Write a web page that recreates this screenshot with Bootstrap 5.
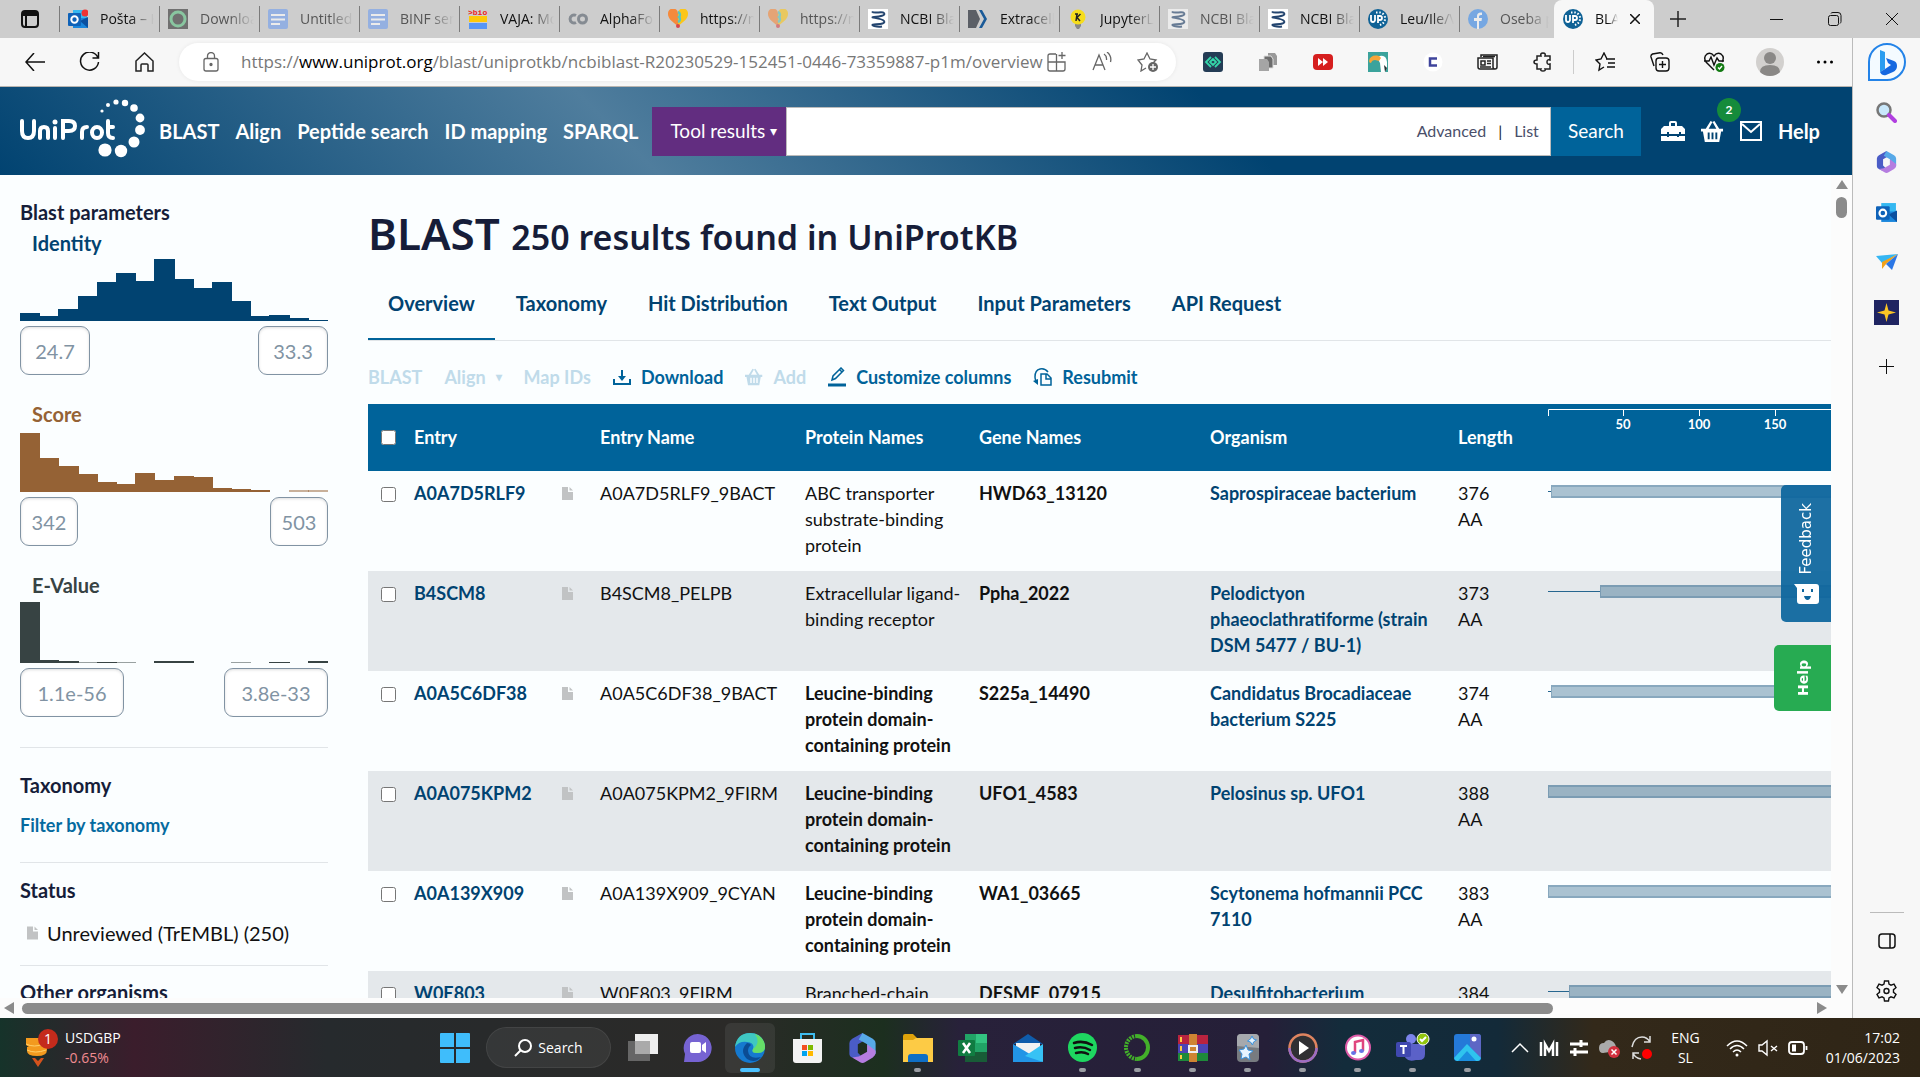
<!DOCTYPE html>
<html lang="en">
<head>
<meta charset="utf-8">
<meta name="viewport" content="width=device-width, initial-scale=1">
<title>BLAST results | UniProt</title>
<link href="https://cdn.jsdelivr.net/npm/bootstrap@5.3.0/dist/css/bootstrap.min.css" rel="stylesheet">
<style>
  :root { --navy: #014371; --sea: #00639a; --ink: #161d39; --page: #fbfeff; --steel: #8193a3; }
  body { height: 100vh; overflow: hidden; font-family: Lato, sans-serif; font-size: 18px; line-height: 26px; color: #111; background: var(--page); }
  a { text-decoration: none; color: inherit; }
  button, input { font-family: inherit; }
  svg { display: block; flex: none; }
  .ui { font-family: "Open Sans", sans-serif; }
  .plain { border: 0; background: none; padding: 0; color: inherit; }
  .fit { min-width: 0; min-height: 0; }
  /* window tabs */
  .strip { background: #cdcdcd; height: 38px; font-size: 14px; color: #111; flex: none; }
  .strip-lead { width: 59px; padding-left: 20px; }
  .wtab { width: 100px; height: 26px; border-left: 1px solid #7b7b7b; padding-left: 8px; gap: 12px; overflow: hidden; }
  .wtab span { flex: 1; min-width: 0; white-space: nowrap; overflow: hidden; margin-right: 5px; -webkit-mask-image: linear-gradient(90deg,#000 55%,transparent); mask-image: linear-gradient(90deg,#000 55%,transparent); }
  .wtab.asleep { color: #555; }
  .wtab.asleep svg { opacity: .6; }
  .wtab.live { background: #f7f7f7; height: 38px; border: 0; border-radius: 8px 8px 0 0; padding: 0 14px 0 9px; }
  .wtab.live span { margin: 0; }
  .wtab.last { width: 95px; }
  .winctl { gap: 38px; padding-right: 18px; }
  /* toolbar */
  .tools { background: #f7f7f7; height: 49px; flex: none; border-bottom: 1px solid #b9b5b0; padding-left: 7px; }
  .slot { width: 55px; height: 40px; flex: none; display: grid; place-items: center; }
  .address { flex: 1; height: 38px; border-radius: 19px; background: #fff; margin-left: 7px; padding: 0 17px 0 22px; box-shadow: 0 0 4px #0001; }
  .address p { flex: 1; margin: 0 0 0 20px; font-size: 17px; color: #777; white-space: nowrap; overflow: hidden; }
  .address b { font-weight: 400; color: #000; }
  .addr-icons { gap: 25px; }
  .exts { padding-left: 9px; }
  .vbar { width: 1px; height: 24px; background: #ccc; margin: 0 3px; }
  /* side bar of the window */
  .rail { width: 68px; background: #f7f7f7; border-left: 1px solid #bbb; padding: 5px 0 2px; flex: none; }
  .rail button { height: 50px; }
  .rail .first { height: 38px; margin-bottom: 6px; }
  .rail hr { width: 34px; margin: 0 0 3px; opacity: 1; color: #bbb; }
  /* site header */
  .masthead { height: 88px; background: linear-gradient(45deg,var(--navy) 0,#4f7d9d 34%,var(--navy) 66%); color: #fff; padding: 0 30px 0 20px; font-weight: 700; font-size: 20px; }
  .sitenav { gap: 16px; margin-left: 14px; margin-right: 14px; white-space: nowrap; }
  .query { flex: 1; height: 49px; font-weight: 400; font-size: 19px; }
  .query select { appearance: none; width: 134px; border: 0; background: #622d80; color: #fff; padding: 0 18px; }
  .pickwrap { position: relative; display: flex; }
  .pickwrap::after { content: "▾"; position: absolute; right: 9px; top: 11px; font-size: 14px; color: #fff; pointer-events: none; }
  .query .field { flex: 1; background: #fff; border: 1px solid #bbb; color: #4a4f6a; font-size: 16px; padding-right: 11px; gap: 12px; }
  .query input { flex: 1; min-width: 0; border: 0; outline: 0; background: none; }
  .query .go { width: 90px; border: 0; background: var(--sea); color: #fff; }
  .headicons { gap: 16px; margin-left: 20px; }
  .headicons > :last-child { padding-right: 2px; }
  .basket { position: relative; }
  .count { position: absolute; left: 16px; top: -22px; width: 24px; height: 24px; border-radius: 50%; background: #158b3b; font: 700 12px/24px Lato, sans-serif; text-align: center; }
  /* filters */
  .filters { width: 328px; padding: 23px 0 0 20px; flex: none; overflow: hidden; font-size: 20px; }
  .filters h2, .filters h3 { font-size: 20px; line-height: 28px; font-weight: 700; margin: 0; color: var(--ink); }
  .filters h3 { padding-left: 12px; margin-top: 3px; color: var(--tone); }
  .filters h4 { font-size: 20px; line-height: 26px; font-weight: 700; margin: 0; color: var(--ink); }
  .p-identity { --tone: #014371; }
  .p-score { --tone: #956235; }
  .p-evalue { --tone: #374343; }
  .param + .param { margin-top: 25px; }
  .hist { height: 64px; display: flex; align-items: flex-end; }
  .hist i { flex: 1; background: var(--tone); margin-right: -1px; }
  .hist i:last-child { margin-right: 0; }
  .hist .dim { opacity: .5; }
  .ends { margin-top: 5px; }
  .ends input { width: 70px; height: 49px; border: 1px solid var(--steel); border-radius: 9px; text-align: center; color: var(--steel); font-size: 20px; background: #fff; box-shadow: inset 0 1px 3px #0002; padding: 0; }
  .three input { width: 58px; }
  .wide input { width: 104px; }
  .filters section { border-top: 1px solid #e1e5e8; }
  .sec-a { margin-top: 30px; padding: 24px 0; }
  .sec-a a { color: #056a9f; font-size: 18px; margin-top: 14px; }
  .sec-b { padding: 14px 0 19px; }
  .sec-b a { gap: 9px; padding-left: 7px; margin-top: 17px; }
  .sec-c { padding: 13px 0; }
  /* results */
  .results { padding: 0 0 0 40px; }
  .results h1 { font-family: "Noto Sans", sans-serif; font-weight: 600; color: var(--ink); font-size: 44px; line-height: 54px; margin: 31px 0 0; white-space: nowrap; }
  .results h1 small { font-size: 34px; font-weight: 600; }
  .pagetabs { margin-top: 1px; height: 76px; border-bottom: 1px solid #e1e5e8; font-size: 20px; font-weight: 700; color: var(--navy); gap: 1px; }
  .pagetabs a { height: 75px; padding: 2px 20px 0; display: flex; align-items: center; border-bottom: 2px solid transparent; white-space: nowrap; }
  .pagetabs .active { border-color: var(--sea); }
  .actions { height: 63px; padding-top: 8px; gap: 22px; font-weight: 700; color: var(--sea); white-space: nowrap; }
  .actions button { display: flex; align-items: center; gap: 10px; font-weight: 700; font-size: 18px; }
  .actions button:disabled { color: #c0dbea; }
  .caret { font-size: 12px; }
  .hits { table-layout: fixed; width: 1463px; min-width: 100%; --bs-table-bg: transparent; }
  .c-check { width: 40px; } .c-entry { width: 148px; } .c-sheet { width: 38px; } .c-name { width: 205px; } .c-protein { width: 174px; } .c-gene { width: 231px; } .c-org { width: 248px; } .c-len { width: 90px; }
  .hits > :not(caption) > * > * { padding: 9px 6px 13px; }
  .hits > thead > tr > th { background: var(--sea); color: #fff; height: 67px; vertical-align: middle; padding: 0 6px 1px; }
  .hits > tbody > tr > * { height: 100px; color: #111; font-weight: 400; }
  .hits > tbody > tr:nth-child(even) > * { background: #e4e8eb; }
  .hits input { width: 15px; height: 15px; display: block; margin: 0 0 0 7px; }
  .hits tbody input { margin-top: 7px; }
  .hits b { font-weight: 700; }
  .hits .lk { color: var(--navy); font-weight: 700; }
  .hits > tbody > tr > .viz { padding: 14px 0 0 6px; }
  .hits > thead > tr > .axis { padding: 0 0 0 6px; vertical-align: top; }
  .track { display: flex; height: 13px; align-items: center; }
  .track i { height: 1px; background: #26668f; flex: none; }
  .track span { flex: 1; height: 13px; background: #01437152; border: 1px solid #01437133; border-width: 2px 0 2px 1px; }
  .sheet { margin-top: 7px; }
  .stick { position: absolute; right: 21px; border: 0; color: #fff; }
  .stick span { writing-mode: vertical-rl; transform: rotate(180deg); }
  .fb { top: 310px; width: 50px; height: 137px; background: #0c659ded; border-radius: 5px 0 0 5px; font: 15px/20px "DejaVu Sans", sans-serif; gap: 10px; padding: 0; }
  .hp { top: 470px; width: 57px; height: 66px; background: #27ab52; border-radius: 5px 0 0 5px; font: 700 14px/20px "DejaVu Sans", sans-serif; padding: 0; }
  .vscroll { width: 21px; background: #fcfcfc; padding: 5px 0 4px; flex: none; }
  .vscroll i { width: 11px; height: 21px; border-radius: 6px; background: #8b8b8b; margin-top: 8px; }
  .hscroll { height: 20px; background: #fcfcfc; padding: 0 25px 0 4px; flex: none; }
  .hscroll i { flex: 0 1 84%; height: 11px; border-radius: 6px; background: #8b8b8b; margin-left: 8px; }
  /* task bar */
  .taskbar { height: 59px; flex: none; color: #fff; font-size: 14px; line-height: 20px; background: linear-gradient(90deg,#16332a 0,#3b1d2c 7%,#262a2d 17%,#2b2a28 38%,#1c2f1f 46%,#28213a 50%,#251f38 66%,#132c3b 70%,#132a39 78%,#33291a 83%,#2f2516 100%); }
  .ticker { width: 427px; padding-left: 24px; gap: 7px; }
  .drop { color: #f08b91; }
  .tsk { width: 55px; height: 59px; position: relative; display: grid; place-items: center; }
  .tsk.run::after, .tsk.front::after { content: ""; position: absolute; bottom: 5px; left: 24px; width: 7px; height: 4px; border-radius: 2px; background: #9a9da3; }
  .tsk.front { background: #ffffff12; height: 50px; width: 50px; border-radius: 6px; margin-right: 5px; }
  .tsk.front::after { left: 15px; width: 20px; bottom: 1px; background: #4cc2ff; }
  .find { width: 125px; height: 41px; border-radius: 21px; background: #ffffff10; border: 1px solid #ffffff12; color: #fff; gap: 6px; margin: 0 4px; }
  .tray { gap: 10px; padding-right: 20px; }
</style>
</head>
<body class="d-flex flex-column">

<svg width="0" height="0" class="position-absolute" aria-hidden="true">
  <symbol id="gdoc" viewBox="0 0 20 20"><rect width="20" height="20" rx="2" fill="#6f9eef"/><path d="M3 6h14M3 10.500h14M3 15h9" stroke="#fff" stroke-width="2"/></symbol>
  <symbol id="heart" viewBox="0 0 20 20"><path d="M10 17C3 12 0 9 0 5a5 5 0 0 1 10-1z" fill="#f58a3c"/><path d="M10 17c7-5 10-8 10-12a5 5 0 0 0-10-1z" fill="#fbc618"/><path d="M10 3a3 3 0 0 1 1 5 3 3 0 0 1-1 5" stroke="#59c4c2" stroke-width="2.500" fill="none"/><circle cx="10" cy="17" r="2" fill="#d8454a"/></symbol>
  <symbol id="ncbi" viewBox="0 0 20 20"><rect width="20" height="20" fill="#fff"/><path d="M4 2.500c2 3 10-1 12 1.500s-4 3.500-10 4 8 1 10 4-5 3-10 3.500 3 3 8 2" fill="none" stroke="#24456f" stroke-width="2"/></symbol>
  <symbol id="up" viewBox="0 0 20 20"><circle cx="10" cy="10" r="10" fill="#0f6296"/><path d="M3 6v5a2 2 0 0 0 4 0V6M10 14V7h2a2 2 0 0 1 0 4h-2" fill="none" stroke="#fff" stroke-width="1.800"/><path d="M8 3.500h4a6 6 0 0 1 5 7q-1 5-7 6" fill="none" stroke="#fff" stroke-width="2" stroke-dasharray="1.500 1.800"/></symbol>
  <symbol id="outl" viewBox="0 0 20 20"><path d="M5 1h14v10H5z" fill="#35b8f1"/><path d="M5 9h15v10H5z" fill="#1a86dc"/><path d="M12 12l8 7V8z" fill="#0b50a0"/><rect y="4" width="13" height="13" rx="1" fill="#0f62b8"/><circle cx="6.500" cy="10.500" r="3.200" fill="none" stroke="#fff" stroke-width="2"/></symbol>
  <symbol id="m365" viewBox="0 0 28 32"><path d="M14 0L3 6Q0 8 0 11v11q0 3 3 4l6 3 3-5-3-3v-9l9-5z" fill="#4a5cc6"/><path d="M14 0l11 6q3 2 3 5v11l-4 3-5-4v-9l-9-5z" fill="#57a9e8"/><path d="M28 19v2q0 3-3 5l-8 5q-3 2-6 0L3 26l7-1 9-5v-8z" fill="#b57de0"/></symbol>
  <symbol id="basketicon" viewBox="0 0 24 24"><path d="M1 9h4l5-8 2 1-4 7h8l-4-7 2-1 5 8h4v3h-2l-2 11H4L2 12H0V9zm6 4v7h2v-7zm4 0v7h2v-7zm4 0v7h2v-7z" fill="currentColor"/></symbol>
  <symbol id="docicon" viewBox="0 0 11 13"><path d="M0 0h6v5h5v8H0z" fill="#c1c3c4"/><path d="M7.500 0v3.500H11z" fill="#c1c3c4"/></symbol>
</svg>

<!-- window tabs -->
<div class="strip ui d-flex align-items-center">
  <div class="strip-lead"><svg width="20" height="20" viewBox="0 0 20 20" fill="none" stroke="#111" stroke-width="2"><rect x="2" y="2" width="16" height="16" rx="3"/><path d="M2 5h16" stroke-width="4"/><path d="M6 5v13"/></svg></div>
  <div class="wtab d-flex align-items-center"><svg width="20" height="20"><use href="#outl"/><circle cx="17" cy="4" r="3.500" fill="#e33"/></svg><span>Pošta – Kla</span></div>
  <div class="wtab asleep d-flex align-items-center"><svg width="20" height="20" viewBox="0 0 20 20"><rect width="20" height="20" fill="#333"/><circle cx="10" cy="10" r="7" fill="none" stroke="#5cc283" stroke-width="3"/></svg><span>Downloads</span></div>
  <div class="wtab asleep d-flex align-items-center"><svg width="20" height="20"><use href="#gdoc"/></svg><span>Untitled d</span></div>
  <div class="wtab asleep d-flex align-items-center"><svg width="20" height="20"><use href="#gdoc"/></svg><span>BINF semi</span></div>
  <div class="wtab d-flex align-items-center"><svg width="20" height="20" viewBox="0 0 20 20"><text x="0" y="6" font-size="8" font-weight="700" fill="#e22" font-family="Liberation Mono">&gt;bio</text><path d="M1 7h18v6H1z" fill="#fdc809"/><path d="M1 14h18v6H1z" fill="#5796f5"/></svg><span>VAJA: Mo</span></div>
  <div class="wtab d-flex align-items-center"><svg width="20" height="20" viewBox="0 0 20 20" fill="none" stroke="#858b92" stroke-width="3"><path d="M8 6.500a4 4 0 1 0 0 7"/><circle cx="14.500" cy="10" r="4"/></svg><span>AlphaFold</span></div>
  <div class="wtab d-flex align-items-center"><svg width="20" height="20"><use href="#heart"/></svg><span>https://mo</span></div>
  <div class="wtab asleep d-flex align-items-center"><svg width="20" height="20"><use href="#heart"/></svg><span>https://mo</span></div>
  <div class="wtab d-flex align-items-center"><svg width="20" height="20"><use href="#ncbi"/></svg><span>NCBI Blast</span></div>
  <div class="wtab d-flex align-items-center"><svg width="20" height="20" viewBox="0 0 20 20"><path d="M0 1h8l4 9-4 9H0z" fill="#5b5f66"/><path d="M11 1h3l5 9-5 9h-3l5-9z" fill="#1a5a98"/></svg><span>Extracellul</span></div>
  <div class="wtab d-flex align-items-center"><svg width="20" height="20" viewBox="0 0 20 20"><path d="M7 13h6v4l-2 3H9l-2-3z" fill="#888"/><circle cx="10" cy="8" r="7.500" fill="#f6dd1b"/><path d="M9 5l-1 7M12.500 5L9 8.500l3 3.500M7 5h3" stroke="#222" stroke-width="1.500" fill="none"/></svg><span>JupyterLab</span></div>
  <div class="wtab asleep d-flex align-items-center"><svg width="20" height="20"><use href="#ncbi"/></svg><span>NCBI Blast</span></div>
  <div class="wtab d-flex align-items-center"><svg width="20" height="20"><use href="#ncbi"/></svg><span>NCBI Blast</span></div>
  <div class="wtab d-flex align-items-center"><svg width="20" height="20"><use href="#up"/></svg><span>Leu/Ile/Val</span></div>
  <div class="wtab last asleep d-flex align-items-center"><svg width="20" height="20" viewBox="0 0 20 20"><circle cx="10" cy="10" r="10" fill="#3d8ff0"/><path d="M9 20v-8H6V9h3V7q0-4 5-3.500V6q-3-.5-3 1.500V9h3l-.5 3H11v8z" fill="#fff"/></svg><span>Oseba po</span></div>
  <div class="wtab live d-flex align-items-center"><svg width="20" height="20"><use href="#up"/></svg><span>BLAST</span><svg width="10" height="10" viewBox="0 0 10 10" stroke="#111" stroke-width="1.500"><path d="M0 0l10 10M10 0L0 10"/></svg></div>
  <button class="plain ms-3" aria-label="New tab"><svg width="16" height="16" viewBox="0 0 16 16" stroke="#222" stroke-width="1.500"><path d="M8 0v16M0 8h16"/></svg></button>
  <div class="winctl d-flex align-items-center ms-auto">
    <svg width="20" height="14" viewBox="0 0 20 14" stroke="#111"><path d="M4 7.500h13"/></svg>
    <svg width="20" height="14" viewBox="0 0 20 14" fill="none" stroke="#111"><rect x="4.500" y="3.500" width="10" height="10" rx="2"/><path d="M7 1.500q0-1 2-1h5q3 0 3 3v6q0 1-1 2"/></svg>
    <svg width="20" height="14" viewBox="0 0 20 14" stroke="#111"><path d="M4 1l12 12M16 1L4 13"/></svg>
  </div>
</div>

<div class="d-flex flex-grow-1 fit">
<div class="d-flex flex-column flex-grow-1 fit">

  <!-- toolbar -->
  <div class="tools ui d-flex align-items-center">
    <button class="plain slot" aria-label="Back"><svg width="20" height="18" viewBox="0 0 20 18" fill="none" stroke="#111" stroke-width="1.500"><path d="M9 0L1 9l8 9M1 9h19"/></svg></button>
    <button class="plain slot" aria-label="Refresh"><svg width="21" height="20" viewBox="0 0 21 20" fill="none" stroke="#111" stroke-width="1.500"><path d="M19 6A9 9 0 1 0 19.500 10M19.500 0v6h-6"/></svg></button>
    <button class="plain slot" aria-label="Home"><svg width="19" height="20" viewBox="0 0 19 20" fill="none" stroke="#222" stroke-width="1.500"><path d="M1 9l8.500-8L18 9v10h-5v-6q0-1-1-1H7q-1 0-1 1v6H1z"/></svg></button>
    <div class="address d-flex align-items-center">
      <svg width="20" height="20" viewBox="0 0 20 20" fill="none" stroke="#666" stroke-width="1.300"><rect x="3" y="6.500" width="14" height="12.500" rx="2"/><path d="M6.500 6V4a3.500 3.500 0 0 1 7 0v2"/><circle cx="10" cy="12.500" r="1" fill="#666"/></svg>
      <p>https://<b>www.uniprot.org</b>/blast/uniprotkb/ncbiblast-R20230529-152451-0446-73359887-p1m/overview</p>
      <div class="addr-icons d-flex">
        <svg width="20" height="20" viewBox="0 0 20 20" fill="none" stroke="#666" stroke-width="1.300"><path d="M9 2H3Q1 2 1 4v13q0 2 2 2h13q2 0 2-2v-7H1M9.500 2v17M15 0v7M11.500 3.500h7"/></svg>
        <svg width="20" height="20" viewBox="0 0 20 20" fill="none" stroke="#666" stroke-width="1.300"><path d="M1 18L7 3l6 15M3 13h8M12 2q3 2 2.500 6M15 0q5 4 3.500 10"/></svg>
        <svg width="22" height="20" viewBox="0 0 22 20" fill="none" stroke="#666" stroke-width="1.300"><path d="M9 16l-5 3 1-6-4-5 6-1 3-6 3 6 6 1-3 3"/><circle cx="16" cy="15" r="5" fill="#666" stroke="none"/><path d="M16 12v6M13 15h6" stroke="#fff"/></svg>
      </div>
    </div>
    <div class="exts d-flex align-items-center">
      <div class="slot"><svg width="20" height="20" viewBox="0 0 20 20"><rect width="20" height="20" rx="3" fill="#243c55"/><path d="M8 5l-5 5 5 5M12 5l5 5-5 5M10 7l-3 3 3 3 3-3z" fill="none" stroke="#34d6a9" stroke-width="1.800"/></svg></div>
      <div class="slot"><svg width="18" height="18" viewBox="0 0 18 18"><path d="M9 0h7l2 3v9H9z" fill="#999"/><path d="M5 3h7l2 3v9H5z" fill="#6c6c6c" stroke="#ddd"/><path d="M0 6h8l2 3v9H0z" fill="#a5a5a5"/></svg></div>
      <div class="slot"><svg width="20" height="16" viewBox="0 0 20 16"><rect width="20" height="16" rx="4" fill="#d61f1f"/><path d="M5 4l5 4-5 4zM10 4l5 4-5 4z" fill="#fff"/></svg></div>
      <div class="slot"><svg width="20" height="20" viewBox="0 0 20 20"><rect width="20" height="20" fill="#3ba39c"/><path d="M9 5q9-4 10 5v6l-2 4h-4l-1-9z" fill="#fff"/><path d="M1 9q1-6 8-5.500 3 0 4 2.500l-2 3-4-1q-3 0-4 3-2 0-2-2z" fill="#f7a538"/><path d="M16 13l3 3-2 4z" fill="#233"/></svg></div>
      <div class="slot"><svg width="20" height="20" viewBox="0 0 20 20"><circle cx="10" cy="10" r="9.500" fill="#fff"/><path d="M14 6.500H7v7h7" fill="none" stroke="#3f449c" stroke-width="2.500"/></svg></div>
      <div class="slot"><svg width="21" height="16" viewBox="0 0 21 16" fill="none" stroke="#222" stroke-width="1.500"><path d="M4 3V1h16v12q0 2-2 2H3q-2 0-2-2V4h15v9q0 2 2 2"/><path d="M4 7h4v4H4zM10 7h4M10 9.500h4M3 13h11M6 2.500h12"/></svg></div>
      <div class="slot"><svg width="20" height="20" viewBox="0 0 20 20" fill="none" stroke="#222" stroke-width="1.500"><path d="M4 4h4q-1-3 2-3t2 3h5v4q-3-1-3 2t3 2v5h-5q1 2-2 2t-2-2H4v-5q-3 0-3-2t3-2z"/></svg></div>
      <div class="vbar"></div>
      <div class="slot"><svg width="20" height="20" viewBox="0 0 20 20" fill="none" stroke="#111" stroke-width="1.400"><path d="M9 15l-5 3 1-6-4-4 5-1 3-6 3 6M11 7h9M13 11h7M12 15h8"/></svg></div>
      <div class="slot"><svg width="20" height="20" viewBox="0 0 20 20" fill="none" stroke="#111" stroke-width="1.400"><rect x="6" y="6" width="13" height="13" rx="3"/><path d="M12.500 9v7M9 12.500h7M4 14L1 5q-.5-2 1.500-3L10 .8Q12 .6 13 3"/></svg></div>
      <div class="slot"><svg width="21" height="20" viewBox="0 0 21 20" fill="none" stroke="#111" stroke-width="1.400"><path d="M10 18L2 10Q-1 5 3 2q4-2 7 2 3-4 7-2 4 3 1 8M0 9h5l2-4 3 8 3-7 2 3h5"/><circle cx="16" cy="15.500" r="4.500" fill="#137a13" stroke="none"/><path d="M14 15.500l1.500 1.500 2.500-3" stroke="#fff"/></svg></div>
      <div class="slot"><svg width="28" height="28" viewBox="0 0 28 28"><circle cx="14" cy="14" r="14" fill="#d2d0ce"/><circle cx="14" cy="10" r="6" fill="#8a8886"/><path d="M4 24q0-7 10-7t10 7q-4 4-10 4T4 24z" fill="#8a8886"/></svg></div>
      <div class="slot"><svg width="16" height="4" viewBox="0 0 16 4"><path d="M0 2a1.500 1.500 0 1 0 3 0 1.500 1.500 0 1 0-3 0m6.500 0a1.500 1.500 0 1 0 3 0 1.500 1.500 0 1 0-3 0M13 2a1.500 1.500 0 1 0 3 0 1.500 1.500 0 1 0-3 0"/></svg></div>
    </div>
  </div>

  <!-- site header -->
  <header class="masthead d-flex align-items-center flex-shrink-0">
    <a href="#" aria-label="UniProt"><svg width="125" height="64" viewBox="0 0 125 64" fill="none" stroke="#fff" stroke-width="4" stroke-linecap="round">
      <path d="M2 22v10q0 7 6 7t6-7V22M20 39V32q0-4 4-4t4 4v7M35 29v10M43 39V22h6q6 0 6 5t-6 5h-5M62 39V33q0-5 5-5"/><ellipse cx="77" cy="33.500" rx="5" ry="5.500"/><path d="M88 22v12q0 5 5 5M88 28h5"/>
      <g fill="#fff" stroke="none"><circle cx="35" cy="23" r="2.500"/><circle cx="82" cy="12" r="1.600"/><circle cx="88" cy="6" r="2"/><circle cx="96" cy="3" r="2.600"/><circle cx="105" cy="4" r="3.200"/><circle cx="114" cy="9" r="3.800"/><circle cx="120" cy="19" r="4.400"/><circle cx="120" cy="31" r="4.900"/><circle cx="114" cy="43" r="5.500"/><circle cx="101" cy="52" r="6.200"/><circle cx="85" cy="51" r="6.600"/></g></svg></a>
    <nav class="sitenav d-flex"><a href="#">BLAST</a><a href="#">Align</a><a href="#">Peptide search</a><a href="#">ID mapping</a><a href="#">SPARQL</a></nav>
    <form class="query d-flex">
      <div class="pickwrap"><select aria-label="Namespace"><option>Tool results</option></select></div>
      <div class="field d-flex align-items-center"><input type="text" aria-label="Query"><a href="#">Advanced</a><span class="text-dark">|</span><a href="#">List</a></div>
      <button type="button" class="go">Search</button>
    </form>
    <div class="headicons d-flex align-items-center">
      <svg width="24" height="24" viewBox="0 0 24 24"><path d="M8 7V4q0-2 2-2h4q2 0 2 2v3h5l3 3v5h-4v-2h-2v2H8v-2H6v2H0v-5l3-3zm2 0h4V4h-4zM0 17h6v1h2v-1h8v1h2v-1h6v5H0z" fill="#fff"/></svg>
      <a href="#" class="basket" aria-label="Basket"><svg width="23" height="23"><use href="#basketicon"/></svg><span class="count">2</span></a>
      <svg width="22" height="22" viewBox="0 0 22 22" fill="none" stroke="#fff" stroke-width="2"><path d="M1 2h20v18H1zM2 4l9 8 9-8"/></svg>
      <a href="#">Help</a>
    </div>
  </header>

  <!-- page -->
  <div class="d-flex flex-grow-1 position-relative overflow-hidden">
    <aside class="filters">
      <h2>Blast parameters</h2>
      <div class="param p-identity">
        <h3>Identity</h3>
        <div class="hist"><i style="height:8px"></i><i style="height:5px"></i><i style="height:12px"></i><i style="height:25px"></i><i style="height:39px"></i><i style="height:48px"></i><i style="height:40px"></i><i style="height:62px"></i><i style="height:42px"></i><i style="height:33px"></i><i style="height:39px"></i><i style="height:20px"></i><i style="height:5px"></i><i style="height:6px"></i><i style="height:3px"></i><i style="height:1px"></i></div>
        <div class="ends d-flex justify-content-between"><input aria-label="Identity min" value="24.7"><input aria-label="Identity max" value="33.3"></div>
      </div>
      <div class="param p-score">
        <h3>Score</h3>
        <div class="hist"><i style="height:59px"></i><i style="height:34px"></i><i style="height:26px"></i><i style="height:18px"></i><i style="height:10px"></i><i style="height:8px"></i><i style="height:19px"></i><i style="height:12px"></i><i style="height:16px"></i><i style="height:15px"></i><i style="height:4px"></i><i style="height:3px"></i><i style="height:2px"></i><i style="height:0"></i><i class="dim" style="height:2px"></i><i class="dim" style="height:2px"></i></div>
        <div class="ends three d-flex justify-content-between"><input aria-label="Score min" value="342"><input aria-label="Score max" value="503"></div>
      </div>
      <div class="param p-evalue">
        <h3>E-Value</h3>
        <div class="hist"><i style="height:61px"></i><i style="height:3px"></i><i style="height:2px"></i><i class="dim" style="height:1px"></i><i style="height:1px"></i><i class="dim" style="height:1px"></i><i style="height:0"></i><i style="height:2px"></i><i style="height:2px"></i><i style="height:0"></i><i style="height:0"></i><i class="dim" style="height:1px"></i><i style="height:0"></i><i style="height:1px"></i><i style="height:0"></i><i style="height:2px"></i></div>
        <div class="ends wide d-flex justify-content-between"><input aria-label="E-Value min" value="1.1e-56"><input aria-label="E-Value max" value="3.8e-33"></div>
      </div>
      <section class="sec-a"><h4>Taxonomy</h4><a href="#" class="d-block fw-bold">Filter by taxonomy</a></section>
      <section class="sec-b"><h4>Status</h4><a href="#" class="d-flex align-items-center"><svg width="11" height="14"><use href="#docicon"/></svg>Unreviewed (TrEMBL) (250)</a></section>
      <section class="sec-c"><h4>Other organisms</h4></section>
    </aside>

    <main class="results flex-grow-1 overflow-hidden fit">
      <h1>BLAST <small>250 results found in UniProtKB</small></h1>
      <nav class="pagetabs d-flex"><a class="active" href="#">Overview</a><a href="#">Taxonomy</a><a href="#">Hit Distribution</a><a href="#">Text Output</a><a href="#">Input Parameters</a><a href="#">API Request</a></nav>
      <div class="actions d-flex align-items-center">
        <button class="plain" disabled>BLAST</button>
        <button class="plain" disabled>Align <span class="caret">▾</span></button>
        <button class="plain" disabled>Map IDs</button>
        <button class="plain"><svg width="18" height="18" viewBox="0 0 18 18" fill="none" stroke="#00639a" stroke-width="2"><path d="M9 2v9M1 11v5h16v-5"/><path d="M5 8l4 5 4-5z" fill="#00639a" stroke="none"/></svg>Download</button>
        <button class="plain" disabled><svg width="18" height="18"><use href="#basketicon"/></svg>Add</button>
        <button class="plain"><svg width="18" height="20" viewBox="0 0 18 20" fill="none" stroke="#00639a"><path d="M0 18h18" stroke-width="3"/><path d="M4 13l1-4 8-8 2.500 2.500-8 8zM11.500 2.500L14 5" stroke-width="1.500"/></svg>Customize columns</button>
        <button class="plain"><svg width="19" height="18" viewBox="0 0 19 18" fill="none" stroke="#00639a" stroke-width="1.500"><path d="M8 6h6l4 4v7H8zM13 6v5h5M15 4Q12 0 7 1T2 9q0 2 1 4"/><path d="M0 13l5 4V11z" fill="#00639a" stroke="none"/></svg>Resubmit</button>
      </div>
      <table class="table table-borderless mb-0 hits">
        <colgroup><col class="c-check"><col class="c-entry"><col class="c-sheet"><col class="c-name"><col class="c-protein"><col class="c-gene"><col class="c-org"><col class="c-len"><col></colgroup>
        <thead><tr><th><input type="checkbox" aria-label="Select all"></th><th colspan="2">Entry</th><th>Entry Name</th><th>Protein Names</th><th>Gene Names</th><th>Organism</th><th>Length</th>
          <th class="axis"><svg width="289" height="30" viewBox="0 0 289 30"><path d="M.5 12V5.500H289M75.500 5v7M151.500 5v7M227.500 5v7" fill="none" stroke="#fff"/><g fill="#fff" font-size="13" font-weight="700" text-anchor="middle" font-family="Lato"><text x="75" y="25">50</text><text x="151" y="25">100</text><text x="227" y="25">150</text></g></svg></th></tr></thead>
        <tbody>
          <tr><td><input type="checkbox" aria-label="A0A7D5RLF9"></td><td><a class="lk" href="#">A0A7D5RLF9</a></td><td><svg class="sheet" width="11" height="13"><use href="#docicon"/></svg></td><td>A0A7D5RLF9_9BACT</td><td>ABC transporter substrate-binding protein</td><td><b>HWD63_13120</b></td><td><a class="lk" href="#">Saprospiraceae bacterium</a></td><td>376<br>AA</td><td class="viz"><div class="track"><i style="width:3px"></i><span></span></div></td></tr>
          <tr><td><input type="checkbox" aria-label="B4SCM8"></td><td><a class="lk" href="#">B4SCM8</a></td><td><svg class="sheet" width="11" height="13"><use href="#docicon"/></svg></td><td>B4SCM8_PELPB</td><td>Extracellular ligand-binding receptor</td><td><b>Ppha_2022</b></td><td><a class="lk" href="#">Pelodictyon phaeoclathratiforme (strain DSM 5477 / BU-1)</a></td><td>373<br>AA</td><td class="viz"><div class="track"><i style="width:52px"></i><span></span></div></td></tr>
          <tr><td><input type="checkbox" aria-label="A0A5C6DF38"></td><td><a class="lk" href="#">A0A5C6DF38</a></td><td><svg class="sheet" width="11" height="13"><use href="#docicon"/></svg></td><td>A0A5C6DF38_9BACT</td><td><b>Leucine-binding protein domain-containing protein</b></td><td><b>S225a_14490</b></td><td><a class="lk" href="#">Candidatus Brocadiaceae bacterium S225</a></td><td>374<br>AA</td><td class="viz"><div class="track"><i style="width:3px"></i><span></span></div></td></tr>
          <tr><td><input type="checkbox" aria-label="A0A075KPM2"></td><td><a class="lk" href="#">A0A075KPM2</a></td><td><svg class="sheet" width="11" height="13"><use href="#docicon"/></svg></td><td>A0A075KPM2_9FIRM</td><td><b>Leucine-binding protein domain-containing protein</b></td><td><b>UFO1_4583</b></td><td><a class="lk" href="#">Pelosinus sp. UFO1</a></td><td>388<br>AA</td><td class="viz"><div class="track"><span></span></div></td></tr>
          <tr><td><input type="checkbox" aria-label="A0A139X909"></td><td><a class="lk" href="#">A0A139X909</a></td><td><svg class="sheet" width="11" height="13"><use href="#docicon"/></svg></td><td>A0A139X909_9CYAN</td><td><b>Leucine-binding protein domain-containing protein</b></td><td><b>WA1_03665</b></td><td><a class="lk" href="#">Scytonema hofmannii PCC 7110</a></td><td>383<br>AA</td><td class="viz"><div class="track"><span></span></div></td></tr>
          <tr><td><input type="checkbox" aria-label="W0E803"></td><td><a class="lk" href="#">W0E803</a></td><td><svg class="sheet" width="11" height="13"><use href="#docicon"/></svg></td><td>W0E803_9FIRM</td><td>Branched-chain</td><td><b>DESME_07915</b></td><td><a class="lk" href="#">Desulfitobacterium</a></td><td>384</td><td class="viz"><div class="track"><i style="width:21px"></i><span></span></div></td></tr>
        </tbody>
      </table>
    </main>

    <div class="vscroll d-flex flex-column align-items-center">
      <svg width="12" height="9" viewBox="0 0 12 9"><path d="M6 0l6 9H0z" fill="#8b8b8b"/></svg><i></i>
      <svg class="mt-auto" width="12" height="9" viewBox="0 0 12 9"><path d="M6 9l6-9H0z" fill="#8b8b8b"/></svg>
    </div>
    <button class="stick fb d-flex flex-column align-items-center justify-content-center"><span>Feedback</span><svg width="25" height="20" viewBox="0 0 25 20"><path d="M0 0h22q3 0 3 3v14q0 3-3 3H6q-3 0-3-3V4z" fill="#fff"/><path d="M9 5v3M18 5v3" stroke="#0c659d" stroke-width="2"/><path d="M10 12h7q-1 4-3.500 4T10 12z" fill="#0c659d"/></svg></button>
    <button class="stick hp d-flex align-items-center justify-content-center"><span>Help</span></button>
  </div>
  <div class="hscroll d-flex align-items-center">
    <svg width="10" height="12" viewBox="0 0 10 12"><path d="M0 6l10-6v12z" fill="#8b8b8b"/></svg><i></i>
    <svg class="ms-auto" width="10" height="12" viewBox="0 0 10 12"><path d="M10 6L0 0v12z" fill="#8b8b8b"/></svg>
  </div>
</div>

<!-- window side bar -->
<div class="rail d-flex flex-column align-items-center">
  <button class="plain first" aria-label="Bing"><svg width="38" height="38" viewBox="0 0 38 38"><path d="M1 37V19A18 18 0 1 1 19 37z" fill="#f4fbff" stroke="#2383e8" stroke-width="2"/><path d="M12 7l5 2v17l-5 3z" fill="#2a9df0"/><path d="M12 29l5-3 6-4-3-2-2-5 8 3q3 1 3 5t-4 6l-7 3q-4 1-6-3z" fill="#1568e0"/></svg></button>
  <button class="plain" aria-label="Search"><svg width="21" height="21" viewBox="0 0 21 21"><circle cx="8" cy="8" r="6.500" fill="#c9e8fb" stroke="#777" stroke-width="2.500"/><path d="M13 13l6 6" stroke="#b13fe0" stroke-width="4" stroke-linecap="round"/></svg></button>
  <button class="plain" aria-label="Microsoft 365"><svg width="21" height="22"><use href="#m365"/></svg></button>
  <button class="plain" aria-label="Outlook"><svg width="21" height="21"><use href="#outl"/></svg></button>
  <button class="plain" aria-label="Drop"><svg width="22" height="17" viewBox="0 0 22 17"><path d="M0 2L22 0 6 9z" fill="#35b6f3"/><path d="M22 0L6 8v7l4-5z" fill="#f2a219"/><path d="M22 0L10 10l6 6z" fill="#2b77e6"/></svg></button>
  <button class="plain" aria-label="Star"><svg width="25" height="25" viewBox="0 0 25 25"><path d="M0 0h25v25H0z" fill="#1f2461"/><path d="M12.500 3l2 7.500 7.500 2-7.500 2-2 7.500-2-7.500-7.500-2 7.500-2z" fill="#fac425"/></svg></button>
  <button class="plain mt-1" aria-label="Add"><svg width="15" height="15" viewBox="0 0 15 15" stroke="#111"><path d="M7.500 0v15M0 7.500h15"/></svg></button>
  <hr class="mt-auto">
  <button class="plain" aria-label="Side bar"><svg width="18" height="16" viewBox="0 0 18 16" fill="none" stroke="#111" stroke-width="1.500"><rect x="1" y="1" width="16" height="14" rx="3"/><path d="M12 1v14"/></svg></button>
  <button class="plain" aria-label="Settings"><svg width="21" height="22" viewBox="0 0 21 22" fill="none" stroke="#111" stroke-width="1.400"><path d="M8.500 1h4l.5 3 2 1.200 3-1 2 3.500-2.500 2v2.600l2.500 2-2 3.500-3-1-2 1.200-.5 3h-4L8 18l-2-1.200-3 1-2-3.500 2.500-2V9.700L1 7.700l2-3.500 3 1L8 4z"/><circle cx="10.500" cy="11" r="2.500"/></svg></button>
</div>
</div>

<!-- task bar -->
<footer class="taskbar ui d-flex align-items-center">
  <div class="ticker d-flex align-items-center">
    <svg width="34" height="38" viewBox="0 0 34 38"><path d="M2 9h18v5h3v7q0 6-10 6T3 22v-4h2q-3-1-3-3z" fill="#f39a1e"/><path d="M2 15q8 4 18 0M3 21q8 4 19 0" stroke="#ffd06a" fill="none"/><path d="M8 29h3l3 3 3-3h3l-6 9z" fill="#d4521c"/><circle cx="24" cy="10" r="10" fill="#c42b1c"/><text x="24" y="15" text-anchor="middle" fill="#fff" font-size="14">1</text></svg>
    <div>USDGBP<br><span class="drop">-0.65%</span></div>
  </div>
  <div class="d-flex align-items-center">
    <div class="tsk"><svg width="30" height="30" viewBox="0 0 30 30"><path d="M0 1q0-1 1-1h13v14H0zM16 0h13q1 0 1 1v13H16zM0 16h14v14H1q-1 0-1-1zM16 16h14v13q0 1-1 1H16z" fill="#3fbdfb"/></svg></div>
    <button class="find d-flex align-items-center justify-content-center"><svg width="18" height="18" viewBox="0 0 18 18" fill="none" stroke="#fff" stroke-width="2"><circle cx="11" cy="7" r="6"/><path d="M7 11l-6 6"/></svg>Search</button>
    <div class="tsk"><svg width="30" height="30" viewBox="0 0 30 30"><rect y="8" width="22" height="20" fill="#666"/><rect x="7" y="1" width="23" height="20" fill="#eee"/><path d="M7 8h15v13H7z" fill="#aaa"/></svg></div>
    <div class="tsk"><svg width="29" height="29" viewBox="0 0 29 29"><path d="M1 29l1-8A14 14 0 1 1 14 29z" fill="#7663d2"/><rect x="7" y="9" width="11" height="11" rx="2" fill="#fff"/><path d="M19 12l4-3v11l-4-3z" fill="#fff"/></svg></div>
    <div class="tsk front"><svg width="30" height="30" viewBox="0 0 30 30"><circle cx="15" cy="15" r="15" fill="#1579cf"/><path d="M0 14Q2 0 15 0t15 13q0 7-8 7-6 0-4-4 2-6-6-7T0 14z" fill="#3fc7c2"/><path d="M20 1q10 4 10 13 0 6-8 6-6 0-4-4Q26 10 20 1z" fill="#66de68"/><path d="M12 10q-8 8 0 16 8 5 14-2-12 3-13-6 0-4 3-6-1-2-4-2z" fill="#0b4c94"/></svg></div>
    <div class="tsk"><svg width="29" height="30" viewBox="0 0 29 30"><path d="M8 7V1h13v6" fill="none" stroke="#3fbdf0" stroke-width="2"/><path d="M0 6h29v21q0 3-3 3H3q-3 0-3-3z" fill="#f3f3f3"/><path d="M9 12h5v5H9z" fill="#f25022"/><path d="M15 12h5v5h-5z" fill="#7fba00"/><path d="M9 18h5v5H9z" fill="#00a4ef"/><path d="M15 18h5v5h-5z" fill="#ffb900"/></svg></div>
    <div class="tsk"><svg width="27" height="30"><use href="#m365"/></svg></div>
    <div class="tsk run"><svg width="30" height="28" viewBox="0 0 30 28"><path d="M0 2q0-2 2-2h8l4 4h14v6H0z" fill="#dea20a"/><path d="M0 6h10l3-2h17v24H0z" fill="#fdcb45"/><path d="M5 28v-5q0-3 3-3h14q3 0 3 3v5z" fill="#0f6fc5"/></svg></div>
    <div class="tsk"><svg width="30" height="28" viewBox="0 0 30 28"><path d="M7 0h22v28H7z" fill="#21a366"/><path d="M18 0h11v9H18z" fill="#33c481"/><path d="M7 18h22v10H7z" fill="#185c37"/><rect y="6" width="17" height="16" rx="1" fill="#107c41"/><path d="M5 9l7 10M12 9L5 19" stroke="#fff" stroke-width="2.500"/></svg></div>
    <div class="tsk"><svg width="30" height="28" viewBox="0 0 30 28"><path d="M0 10L15 0l15 10z" fill="#0f5cab"/><path d="M3 9h24v14H3z" fill="#f2f2f2"/><path d="M0 10l30 18H0z" fill="#2295e6"/><path d="M30 10L12 22l18 6z" fill="#37c2f5"/></svg></div>
    <div class="tsk run"><svg width="29" height="29" viewBox="0 0 29 29"><circle cx="14.500" cy="14.500" r="14.500" fill="#1ed760"/><path d="M6 10q9-3 18 2M7 15q8-2 15 2M8 20q7-2 12 1" fill="none" stroke="#111" stroke-width="2.500" stroke-linecap="round"/></svg></div>
    <div class="tsk run"><svg width="27" height="29" viewBox="0 0 27 29" fill="none" stroke="#43b02a"><path d="M13 3a11 11.500 0 0 1 0 23" stroke-width="4"/><path d="M13 3a11 11.500 0 0 0 0 23" stroke-width="4" stroke-dasharray="2 1"/></svg></div>
    <div class="tsk run"><svg width="30" height="28" viewBox="0 0 30 28"><path d="M0 1h30v9H0z" fill="#b9233f"/><path d="M0 10h30v9H0z" fill="#4b44b5"/><path d="M0 19h30v8H0z" fill="#1e8a3a"/><path d="M11 0h8v28h-8z" fill="#cf8433"/><path d="M3 3v5M3 12v5M3 21v4" stroke="#fc4" stroke-width="2"/><rect x="11" y="12" width="8" height="6" fill="none" stroke="#eee" stroke-width="2"/></svg></div>
    <div class="tsk run"><svg width="22" height="28" viewBox="0 0 22 28"><rect width="22" height="28" rx="4" fill="#777b80"/><path d="M0 12L22 14V4q0-4-4-4H4Q0 0 0 4z" fill="#a6a9ad"/><path d="M15 2l1.500 3 3 1-3 2-1 3-2-3-3-1 3-2zM9 11l2 5 5 1-4 3 1 6-4-3-5 2 1-5-3-4 5-1z" fill="#e6f4ff" stroke="#3b93dd"/></svg></div>
    <div class="tsk run"><svg width="30" height="30" viewBox="0 0 30 30"><circle cx="15" cy="15" r="13.500" fill="#303033" stroke="#df8460" stroke-width="2.500"/><path d="M1.500 15a13.500 13.500 0 0 0 27 0" fill="none" stroke="#9b6cc4" stroke-width="2.500"/><path d="M11 8l10 7-10 7z" fill="#fff"/></svg></div>
    <div class="tsk run"><svg width="26" height="27" viewBox="0 0 26 27"><circle cx="13" cy="13.500" r="12" fill="#fff" stroke="#dd5aa8" stroke-width="2"/><path d="M10 19V8l8-2v11" fill="none" stroke="#e0457e" stroke-width="2.500"/><ellipse cx="8.500" cy="19" rx="2.500" ry="2" fill="#6673e6"/><ellipse cx="16.500" cy="17" rx="2.500" ry="2" fill="#6673e6"/></svg></div>
    <div class="tsk run"><svg width="34" height="30" viewBox="0 0 34 30"><circle cx="15" cy="6" r="5" fill="#7b83eb"/><path d="M8 11h21v10q0 6-6 6h-3q-12 3-12-8z" fill="#5b61c8"/><rect y="9" width="15" height="15" rx="2" fill="#4048b0"/><path d="M4 13h7M7.500 13v8" stroke="#fff" stroke-width="2"/><circle cx="27" cy="6" r="6" fill="#92c50e" stroke="#fff"/><path d="M24 6l2 2 4-4" fill="none" stroke="#fff" stroke-width="2"/></svg></div>
    <div class="tsk run"><svg width="27" height="27" viewBox="0 0 27 27"><rect width="27" height="27" rx="3" fill="#2479d8"/><path d="M16 0h8q3 0 3 3v21L16 13z" fill="#5d67c5"/><path d="M0 24l13-14 14 14q-1 3-3 3H3q-2 0-3-3z" fill="#2fc4ee"/><path d="M13 17l9 10H4z" fill="#1b8fe0"/><circle cx="20" cy="5" r="2.500" fill="#fff"/></svg></div>
  </div>
  <div class="tray d-flex align-items-center ms-auto">
    <svg width="18" height="18" viewBox="0 0 18 18" fill="none" stroke="#fff" stroke-width="1.500"><path d="M1 13l8-8 8 8"/></svg>
    <svg width="20" height="18" viewBox="0 0 20 18" fill="none" stroke="#fff" stroke-width="2.500"><path d="M2 3v14M6 17V5l4 7 4-7v12M18 3v14"/></svg>
    <svg width="20" height="18" viewBox="0 0 20 18" fill="none" stroke="#fff"><path d="M1 5h18M1 13h18" stroke-width="3"/><path d="M12 1v7M6 9v8" stroke-width="3"/></svg>
    <svg width="22" height="20" viewBox="0 0 22 20"><path d="M4 15Q0 15 0 10t5-5q3-5 8-2t4 10z" fill="#aaa"/><circle cx="15" cy="14" r="6" fill="#d3303e"/><path d="M12.500 11.500l5 5M17.500 11.500l-5 5" stroke="#fff" stroke-width="1.500"/></svg>
    <svg width="22" height="26" viewBox="0 0 22 26" fill="none" stroke="#ddd" stroke-width="1.500"><path d="M1 12Q3 2 11 2q5 0 8 5M19 1v6h-6M2 24v-6h6M2 18q2 5 8 6"/><circle cx="16" cy="19" r="5" fill="#f00" stroke="none"/></svg>
    <div class="text-center ms-2 me-3">ENG<br>SL</div>
    <svg width="22" height="18" viewBox="0 0 22 18" fill="none" stroke="#fff" stroke-width="1.500"><path d="M1 7q10-10 20 0M4 10q7-7 14 0M7 13q4-4 8 0"/><circle cx="11" cy="16" r="1.500" fill="#fff" stroke="none"/></svg>
    <svg width="20" height="18" viewBox="0 0 20 18" fill="none" stroke="#fff" stroke-width="1.400"><path d="M1 6h3l5-4v14l-5-4H1zM13 7l6 5M19 7l-6 5"/></svg>
    <svg width="20" height="18" viewBox="0 0 20 18" fill="none" stroke="#fff" stroke-width="1.800"><rect x="1" y="3" width="15" height="12" rx="3"/><path d="M18.500 7v4"/><path d="M4 5.500h4v7H4z" fill="#fff" stroke="none"/></svg>
    <div class="text-end ms-2">17:02<br>01/06/2023</div>
  </div>
</footer>
<script src="https://cdn.jsdelivr.net/npm/bootstrap@5.3.0/dist/js/bootstrap.bundle.min.js"></script>
</body>
</html>
